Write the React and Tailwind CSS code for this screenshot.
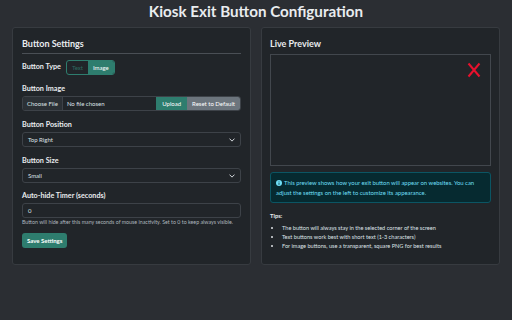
import React from "react";

function Label({ children }) {
  return (
    <div className="h-[10px] flex items-center text-[7.2px] font-bold text-[#e9ecef] leading-none mb-[2px]">
      {children}
    </div>
  );
}

function Select({ value }) {
  return (
    <div className="h-[15px] flex items-center justify-between px-[5px] border border-[#3d4248] rounded-[3px] bg-[#212529] text-[6px] text-[#dee2e6]">
      <span>{value}</span>
      <svg width="6" height="6" viewBox="0 0 16 16" fill="none" stroke="#dee2e6" strokeWidth="2.5" strokeLinecap="round" strokeLinejoin="round">
        <path d="M2 5l6 6 6-6" />
      </svg>
    </div>
  );
}

export default function App() {
  return (
    <div
      className="w-[512px] h-[320px] bg-[#2b2e33] text-[#dee2e6] overflow-hidden"
      style={{ fontFamily: 'Lato, "Open Sans", sans-serif' }}
    >
      <h1 className="h-[27px] flex items-center justify-center text-[15.2px] font-bold text-[#e9ecef] leading-none pb-[4px]">
        Kiosk Exit Button Configuration
      </h1>

      <div className="grid grid-cols-2 gap-[10px] px-[12px]">
        {/* Settings */}
        <div className="h-[238px] bg-[#212529] border border-[#373b40] rounded-[3px] px-[9px] pt-[10px]">
          <div className="h-[10px] flex items-center text-[9px] font-bold text-[#e9ecef] leading-none mb-[5px]">
            Button Settings
          </div>
          <div className="border-b border-[#4a4f55] mb-[6px]" />

          <div className="flex items-center gap-[5px] h-[15px] mb-[9px]">
            <span className="text-[7.2px] font-bold text-[#e9ecef]">Button Type</span>
            <div className="flex h-[15px] text-[6px] rounded-[3px] overflow-hidden border border-[#2e7d6e]">
              <span className="px-[5px] flex items-center text-[#2e6b60]">Text</span>
              <span className="px-[5px] flex items-center bg-[#2e7d6e] text-white">Image</span>
            </div>
          </div>

          <Label>Button Image</Label>
          <div className="flex h-[15px] text-[6px] rounded-[3px] overflow-hidden border border-[#3d4248] mb-[9px]">
            <span className="px-[4px] flex items-center bg-[#2b3035] border-r border-[#3d4248]">Choose File</span>
            <span className="px-[4px] flex items-center flex-1">No file chosen</span>
            <span className="px-[6px] flex items-center bg-[#2e7d6e] text-white">Upload</span>
            <span className="px-[5px] flex items-center bg-[#6c757d] text-white">Reset to Default</span>
          </div>

          <Label>Button Position</Label>
          <div className="mb-[9px]">
            <Select value="Top Right" />
          </div>

          <Label>Button Size</Label>
          <div className="mb-[8px]">
            <Select value="Small" />
          </div>

          <Label>Auto-hide Timer (seconds)</Label>
          <div className="h-[15px] flex items-center px-[5px] border border-[#3d4248] rounded-[3px] text-[6px]">
            0
          </div>
          <div className="h-[8px] flex items-center text-[5.3px] text-[#adb5bd] mt-[1px] mb-[6px] leading-none whitespace-nowrap">
            Button will hide after this many seconds of mouse inactivity. Set to 0 to keep always visible.
          </div>

          <div className="flex">
            <button className="h-[15px] px-[5px] bg-[#2e7d6e] text-white text-[6px] font-bold rounded-[3px] leading-none">
              Save Settings
            </button>
          </div>
        </div>

        {/* Preview */}
        <div className="h-[238px] bg-[#212529] border border-[#373b40] rounded-[3px] px-[8px] pt-[10px]">
          <div className="h-[10px] flex items-center text-[9px] font-bold text-[#e9ecef] leading-none mb-[6px]">
            Live Preview
          </div>
          <div className="h-[112px] border border-[#42474d] flex justify-end items-start pt-[7px] pr-[9px] mb-[6px]">
            <svg width="14" height="16" viewBox="0 0 14 16">
              <path d="M1.5 1.5L12.5 14.5M12.5 1.5L1.5 14.5" stroke="#e8112d" strokeWidth="2" />
            </svg>
          </div>
          <div className="h-[31px] bg-[#062a30] border border-[#0b5563] rounded-[3px] px-[5px] pt-[5px] text-[5.9px] leading-[10px] text-[#6edff6] mb-[8px]">
            <svg width="6" height="6" viewBox="0 0 16 16" className="inline-block align-[-0.5px] mr-[2px]">
              <circle cx="8" cy="8" r="8" fill="#6edff6" />
              <rect x="7" y="7" width="2" height="6" fill="#062a30" />
              <circle cx="8" cy="4.5" r="1.2" fill="#062a30" />
            </svg>
            This preview shows how your exit button will appear on websites. You can adjust the settings on the left to customize its appearance.
          </div>
          <div className="h-[10px] flex items-center text-[5.8px] font-bold text-[#e9ecef] mb-[2px]">Tips:</div>
          <ul className="list-disc pl-[12px] text-[5.6px] text-[#dee2e6] leading-[9.2px]">
            <li>The button will always stay in the selected corner of the screen</li>
            <li>Text buttons work best with short text (1-3 characters)</li>
            <li>For image buttons, use a transparent, square PNG for best results</li>
          </ul>
        </div>
      </div>
    </div>
  );
}
